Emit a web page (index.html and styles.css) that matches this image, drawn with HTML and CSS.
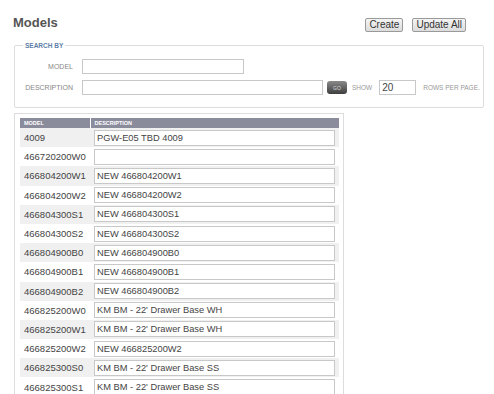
FILE: index.html
```html
<!DOCTYPE html>
<html lang="en">
<head>
    <meta charset="UTF-8">
    <title>Models</title>
    <link rel="stylesheet" href="styles.css">
</head>
<body>
    <div class="page">
        <div class="topbar">
            <h1>Models</h1>
            <div class="actions">
                <button class="btn">Create</button>
                <button class="btn">Update All</button>
            </div>
        </div>

        <fieldset class="search">
            <legend>SEARCH BY</legend>
            <div class="field">
                <label>MODEL</label>
                <input type="text" class="input input-model">
            </div>
            <div class="field">
                <label>DESCRIPTION</label>
                <input type="text" class="input input-desc">
                <button class="go">GO</button>
                <span class="hint">SHOW</span>
                <input type="text" class="input input-rows" value="20">
                <span class="hint rows-label">ROWS PER PAGE.</span>
            </div>
        </fieldset>

        <div class="list">
            <table>
                <thead>
                    <tr><th class="col-model">MODEL</th><th>DESCRIPTION</th></tr>
                </thead>
                <tbody>
                    <tr><td>4009</td><td><input class="cell" value="PGW-E05 TBD 4009"></td></tr>
                    <tr><td>466720200W0</td><td><input class="cell" value=""></td></tr>
                    <tr><td>466804200W1</td><td><input class="cell" value="NEW 466804200W1"></td></tr>
                    <tr><td>466804200W2</td><td><input class="cell" value="NEW 466804200W2"></td></tr>
                    <tr><td>466804300S1</td><td><input class="cell" value="NEW 466804300S1"></td></tr>
                    <tr><td>466804300S2</td><td><input class="cell" value="NEW 466804300S2"></td></tr>
                    <tr><td>466804900B0</td><td><input class="cell" value="NEW 466804900B0"></td></tr>
                    <tr><td>466804900B1</td><td><input class="cell" value="NEW 466804900B1"></td></tr>
                    <tr><td>466804900B2</td><td><input class="cell" value="NEW 466804900B2"></td></tr>
                    <tr><td>466825200W0</td><td><input class="cell" value="KM BM - 22' Drawer Base WH"></td></tr>
                    <tr><td>466825200W1</td><td><input class="cell" value="KM BM - 22' Drawer Base WH"></td></tr>
                    <tr><td>466825200W2</td><td><input class="cell" value="NEW 466825200W2"></td></tr>
                    <tr><td>466825300S0</td><td><input class="cell" value="KM BM - 22' Drawer Base SS"></td></tr>
                    <tr><td>466825300S1</td><td><input class="cell" value="KM BM - 22' Drawer Base SS"></td></tr>
                </tbody>
            </table>
        </div>
    </div>
</body>
</html>
```

FILE: styles.css
```css
* {
    margin: 0;
    padding: 0;
    box-sizing: border-box;
}

body {
    font-family: "Liberation Sans", Arial, sans-serif;
    color: #444;
    background: #fff;
    overflow: hidden;
}

.page {
    padding: 12px 28px 0 13px;
}

/* Title row */
.topbar {
    display: flex;
    justify-content: space-between;
    align-items: center;
    height: 20px;
}

h1 {
    font-size: 13px;
    font-weight: bold;
    color: #555;
}

.actions {
    display: flex;
    gap: 9px;
    padding-top: 6px;
}

.btn {
    font-family: "Liberation Sans", Arial, sans-serif;
    font-size: 10px;
    color: #333;
    background: linear-gradient(#f4f4f4, #dcdcdc);
    border: 1px solid #9a9a9a;
    border-radius: 2px;
    height: 14px;
    padding: 0 3px;
    line-height: 12px;
}

/* Search box */
.search {
    margin: 10px -18px 0 1px;
    border: 1px solid #ddd;
    border-radius: 2px;
    padding: 10px 0 12px 8px;
}

.search legend {
    font-size: 6.5px;
    font-weight: bold;
    color: #5d7fa8;
    padding: 0 2px;
}

.field {
    display: flex;
    align-items: center;
    height: 15px;
    margin-bottom: 6px;
}

.field:last-child {
    margin-bottom: 0;
}

.field label {
    width: 50px;
    text-align: right;
    font-size: 7px;
    color: #888;
    margin-right: 9px;
}

.input {
    height: 15px;
    border: 1px solid #c8c8c8;
    background: #fff;
    font-family: "Liberation Sans", Arial, sans-serif;
}

.input-model {
    width: 162px;
}

.input-desc {
    width: 241px;
}

.go {
    margin-left: 4px;
    width: 20px;
    height: 13px;
    border: none;
    border-radius: 3px;
    background: linear-gradient(#8a8a8a, #3e3e3e);
    color: #ddd;
    font-size: 5px;
    font-family: "Liberation Sans", Arial, sans-serif;
}

.hint {
    font-size: 6.5px;
    color: #999;
    margin-left: 5px;
}

.input-rows {
    width: 37px;
    margin-left: 7px;
    font-size: 10px;
    color: #444;
    padding-left: 2px;
}

.rows-label {
    margin-left: 7px;
}

/* Model list */
.list {
    width: 330px;
    margin: 5px 0 0 1px;
    border: 1px solid #ddd;
    border-bottom: none;
    padding: 4px 4px 0 5px;
}

table {
    width: 100%;
    border-collapse: collapse;
}

th {
    background: #8a8b9b;
    color: #fff;
    font-size: 5.5px;
    font-weight: bold;
    text-align: left;
    height: 10px;
    padding: 0 4px;
}

th.col-model {
    width: 70px;
    border-right: 1px solid #fff;
}

tbody tr {
    height: 19.2px;
}

tbody tr:nth-child(odd) {
    background: #f0f0f0;
}

td {
    font-size: 9.5px;
    color: #444;
    padding: 0 4px;
}

td:last-child {
    padding: 0 0 0 4px;
}

.cell {
    display: block;
    width: 241px;
    height: 16px;
    border: 1px solid #c8c8c8;
    background: #fff;
    font-family: "Liberation Sans", Arial, sans-serif;
    font-size: 9.3px;
    color: #444;
    padding-left: 2px;
}
```
